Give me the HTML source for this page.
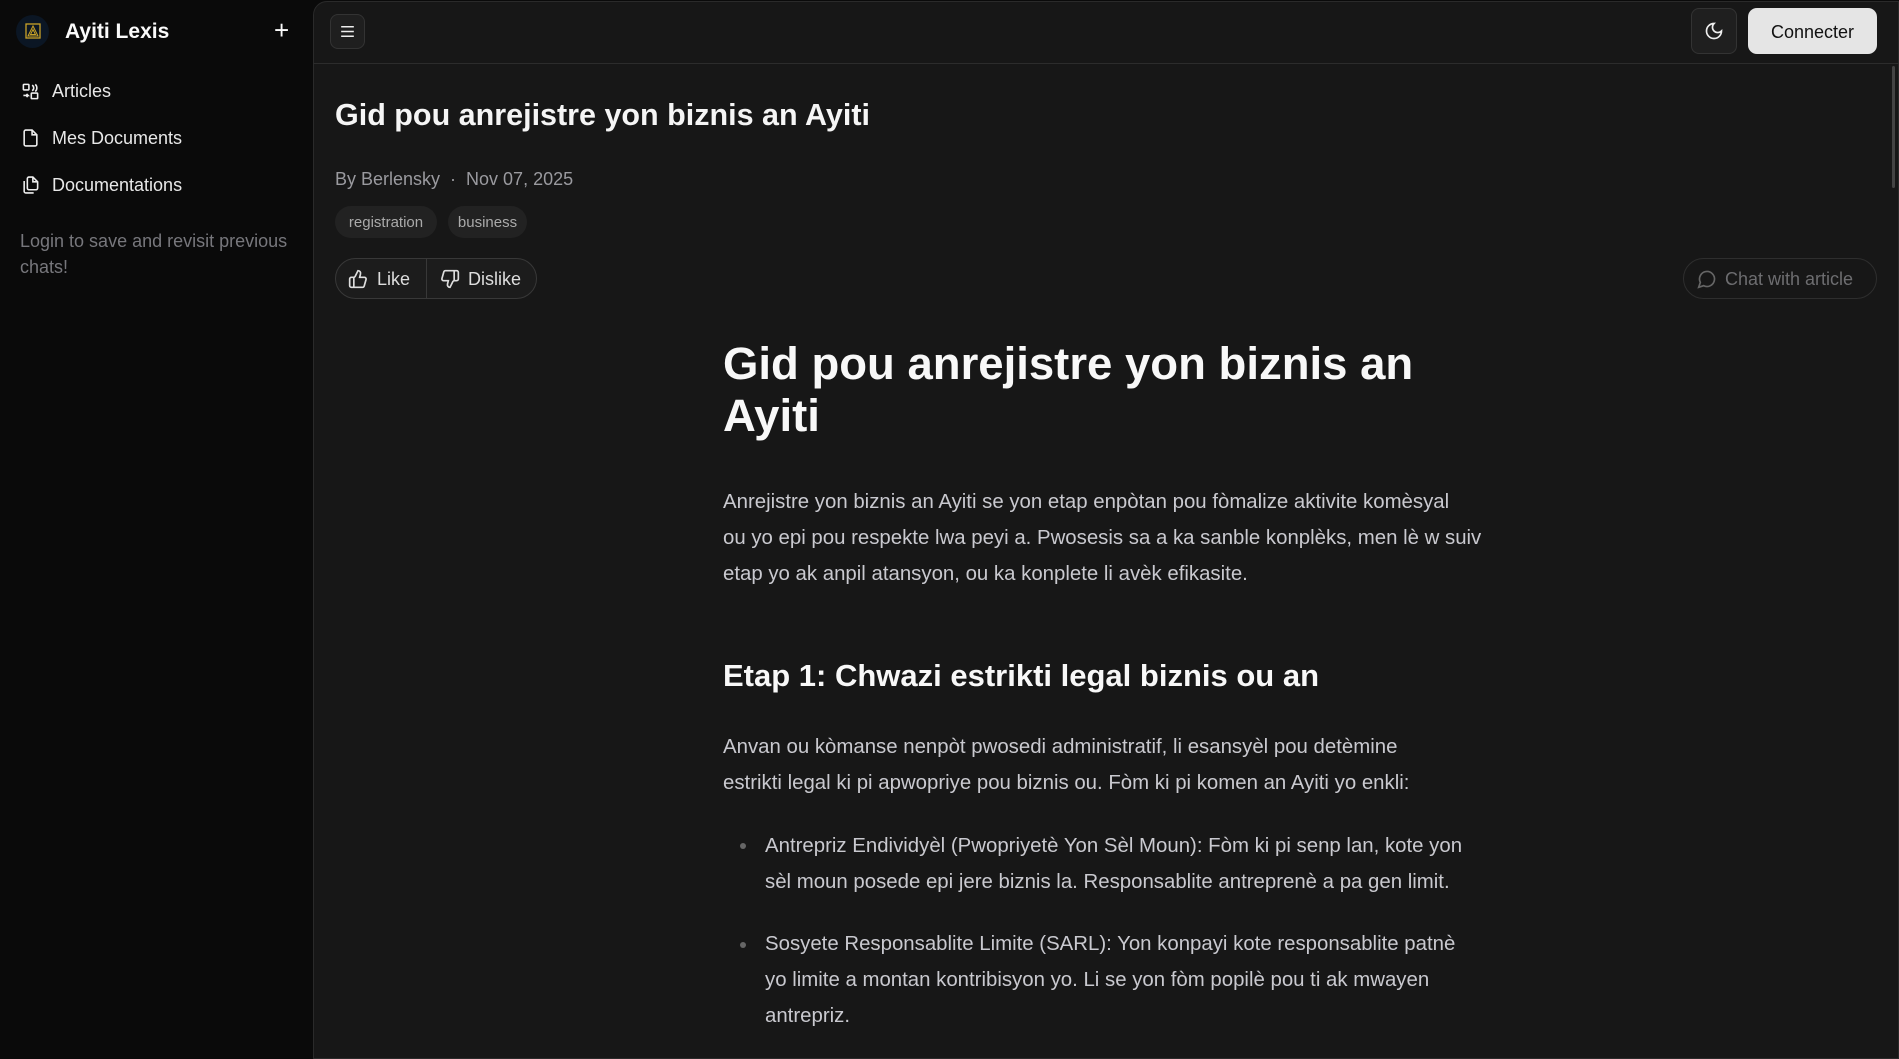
<!DOCTYPE html>
<html><head><meta charset="utf-8"><style>
*{box-sizing:border-box;margin:0;padding:0}
body{width:1899px;height:1059px;background:#0a0a0a;font-family:"Liberation Sans",sans-serif;color:#fafafa;overflow:hidden;position:relative}
.abs{position:absolute;white-space:nowrap}
.main{position:absolute;left:313px;top:1px;width:1586px;height:1058px;background:#171717;border:1px solid #2a2a2a;border-radius:14px 0 0 0}
.hdr{position:absolute;left:313px;top:63px;width:1586px;height:1px;background:#2c2c2c}
.nav{font-size:18px;color:#e8e8e8}
.p{font-size:20.4px;color:#c9c9cf;position:absolute;left:723px;white-space:nowrap;line-height:36px}
svg{position:absolute}
</style></head><body>
<div class="abs" style="left:16px;top:15px;width:33px;height:33px;border-radius:50%;background:#0b1624"></div>
<svg style="left:25px;top:23px" width="16" height="16" viewBox="0 0 16 16"><rect x="1" y="1" width="14" height="14" fill="none" stroke="#c9a227" stroke-width="1.3"/><path d="M8 3 L13 13 H3 Z M8 6.5 L10.5 11.5 H5.5Z" fill="none" stroke="#c9a227" stroke-width="1"/></svg>
<div class="abs" style="left:65px;top:20px;font-size:21px;font-weight:bold">Ayiti Lexis</div>
<div class="abs" style="left:274px;top:15px;font-size:26px;font-weight:300">+</div>
<svg style="left:21px;top:82px" width="19" height="19" viewBox="0 0 24 24" fill="none" stroke="#eee" stroke-width="2"><rect x="3" y="3" width="7" height="7" rx="1"/><path d="M14 4a4 4 0 0 1 0 7M18 3a6 6 0 0 1 0 9"/><rect x="13" y="14" width="8" height="7" rx="1"/><path d="M3 17h6l-2-2M9 17l-2 2"/></svg>
<div class="abs nav" style="left:52px;top:81px">Articles</div>
<svg style="left:21px;top:128px" width="19" height="20" viewBox="0 0 24 24" fill="none" stroke="#eee" stroke-width="2"><path d="M14 2H6a2 2 0 0 0-2 2v16a2 2 0 0 0 2 2h12a2 2 0 0 0 2-2V8z"/><path d="M14 2v6h6"/></svg>
<div class="abs nav" style="left:52px;top:128px">Mes Documents</div>
<svg style="left:21px;top:175px" width="19" height="20" viewBox="0 0 24 24" fill="none" stroke="#eee" stroke-width="2"><path d="M15 2H10a2 2 0 0 0-2 2v12a2 2 0 0 0 2 2h9a2 2 0 0 0 2-2V8z"/><path d="M15 2v6h6"/><path d="M4 7v13a2 2 0 0 0 2 2h10"/></svg>
<div class="abs nav" style="left:52px;top:175px">Documentations</div>
<div class="abs" style="left:20px;top:228px;font-size:18px;color:#77777c;line-height:26px">Login to save and revisit previous<br>chats!</div>
<div class="main"></div>
<div class="hdr"></div>
<div class="abs" style="left:330px;top:14px;width:35px;height:35px;border:1px solid #333;border-radius:8px;background:#1f1f1f"></div>
<svg style="left:338px;top:22px" width="19" height="19" viewBox="0 0 24 24" stroke="#eee" stroke-width="2"><path d="M4 6h16M4 12h16M4 18h16"/></svg>
<div class="abs" style="left:1691px;top:8px;width:46px;height:46px;border:1px solid #333;border-radius:8px;background:#1f1f1f"></div>
<svg style="left:1704px;top:21px" width="20" height="20" viewBox="0 0 24 24" fill="none" stroke="#eee" stroke-width="2"><path d="M12 3a6 6 0 0 0 9 9 9 9 0 1 1-9-9z"/></svg>
<div class="abs" style="left:1748px;top:8px;width:129px;height:46px;border-radius:9px;background:#e5e5e5;color:#111;font-size:18px;text-align:center;line-height:48px">Connecter</div>
<div class="abs" style="left:1892px;top:66px;width:3px;height:122px;background:#444;border-radius:2px"></div>
<div class="abs" style="left:335px;top:98px;font-size:30.5px;font-weight:bold;color:#f5f5f5">Gid pou anrejistre yon biznis an Ayiti</div>
<div class="abs" style="left:335px;top:169px;font-size:18px;color:#9a9a9f">By Berlensky &nbsp;·&nbsp; Nov 07, 2025</div>
<div class="abs" style="left:335px;top:206px;width:102px;height:32px;border-radius:16px;background:#222;color:#aaa;font-size:15px;text-align:center;line-height:34px">registration</div>
<div class="abs" style="left:448px;top:206px;width:79px;height:32px;border-radius:16px;background:#222;color:#aaa;font-size:15px;text-align:center;line-height:34px">business</div>
<div class="abs" style="left:335px;top:258px;width:202px;height:41px;border:1px solid #383838;border-radius:21px;background:#1c1c1c"></div>
<div class="abs" style="left:426px;top:259px;width:1px;height:39px;background:#383838"></div>
<svg style="left:348px;top:269px" width="20" height="20" viewBox="0 0 24 24" fill="none" stroke="#ddd" stroke-width="2"><path d="M7 10v12M15 5.9L14 10h5.8a2 2 0 0 1 1.9 2.5l-2.3 8A2 2 0 0 1 17.5 22H4a2 2 0 0 1-2-2v-8a2 2 0 0 1 2-2h2.8a2 2 0 0 0 1.8-1.1L12 2a3.1 3.1 0 0 1 3 3.9z"/></svg>
<div class="abs" style="left:377px;top:269px;font-size:18px;color:#ddd">Like</div>
<svg style="left:440px;top:269px" width="20" height="20" viewBox="0 0 24 24" fill="none" stroke="#ddd" stroke-width="2"><path d="M17 14V2M9 18.1L10 14H4.2a2 2 0 0 1-1.9-2.5l2.3-8A2 2 0 0 1 6.5 2H20a2 2 0 0 1 2 2v8a2 2 0 0 1-2 2h-2.8a2 2 0 0 0-1.8 1.1L12 22a3.1 3.1 0 0 1-3-3.9z"/></svg>
<div class="abs" style="left:468px;top:269px;font-size:18px;color:#ddd">Dislike</div>
<div class="abs" style="left:1683px;top:258px;width:194px;height:41px;border:1px solid #2e2e2e;border-radius:21px"></div>
<svg style="left:1697px;top:269px" width="20" height="20" viewBox="0 0 24 24" fill="none" stroke="#666" stroke-width="2"><path d="M7.9 20A9 9 0 1 0 4 16.1L2 22z"/></svg>
<div class="abs" style="left:1725px;top:269px;font-size:18px;color:#6d6d70">Chat with article</div>
<div class="abs" style="left:723px;top:338px;font-size:45.5px;font-weight:bold;line-height:52px;color:#f8f8f8">Gid pou anrejistre yon biznis an<br>Ayiti</div>
<div class="p" style="top:484px">Anrejistre yon biznis an Ayiti se yon etap enpòtan pou fòmalize aktivite komèsyal<br>ou yo epi pou respekte lwa peyi a. Pwosesis sa a ka sanble konplèks, men lè w suiv<br>etap yo ak anpil atansyon, ou ka konplete li avèk efikasite.</div>
<div class="abs" style="left:723px;top:658px;font-size:31px;font-weight:bold;color:#f8f8f8">Etap 1: Chwazi estrikti legal biznis ou an</div>
<div class="p" style="top:729px">Anvan ou kòmanse nenpòt pwosedi administratif, li esansyèl pou detèmine<br>estrikti legal ki pi apwopriye pou biznis ou. Fòm ki pi komen an Ayiti yo enkli:</div>
<div class="abs" style="left:740px;top:843px;width:6px;height:6px;border-radius:50%;background:#666"></div>
<div class="p" style="left:765px;top:828px">Antrepriz Endividyèl (Pwopriyetè Yon Sèl Moun): Fòm ki pi senp lan, kote yon<br>sèl moun posede epi jere biznis la. Responsablite antreprenè a pa gen limit.</div>
<div class="abs" style="left:740px;top:942px;width:6px;height:6px;border-radius:50%;background:#666"></div>
<div class="p" style="left:765px;top:926px">Sosyete Responsablite Limite (SARL): Yon konpayi kote responsablite patnè<br>yo limite a montan kontribisyon yo. Li se yon fòm popilè pou ti ak mwayen<br>antrepriz.</div>
</body></html>
